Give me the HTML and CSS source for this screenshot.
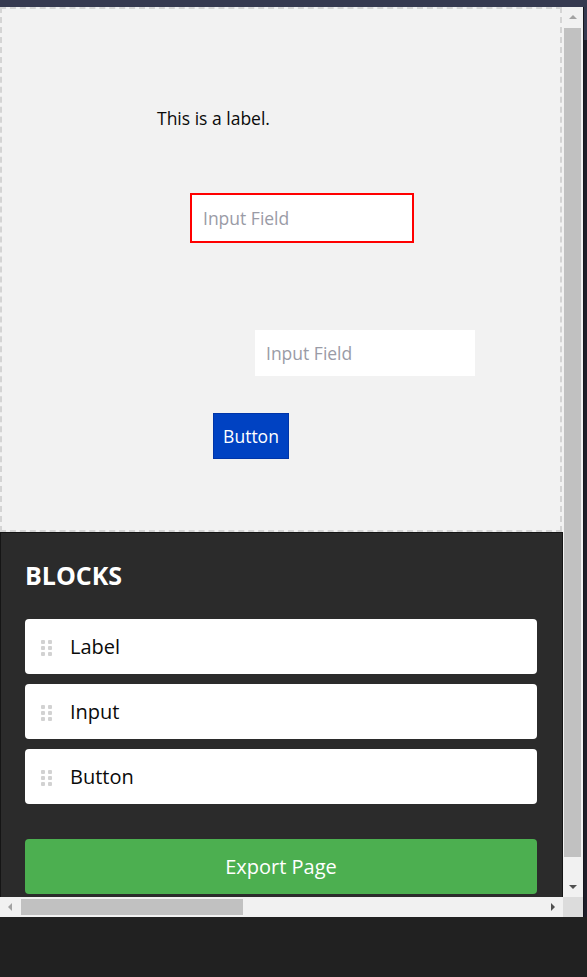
FILE: index.html
```html
<!DOCTYPE html>
<html lang="en">
<head>
<meta charset="utf-8">
<title>Page Builder</title>
<link rel="stylesheet" href="styles.css">
</head>
<body>
<div class="topbar"></div>
<div class="window">
  <div class="frame">
    <div class="viewport">
      <div class="canvas">
        <p class="el el-label">This is a label.</p>
        <input class="el el-input el-input-1 is-selected" type="text" placeholder="Input Field">
        <input class="el el-input el-input-2" type="text" placeholder="Input Field">
        <button class="el el-button" type="button">Button</button>
      </div>
      <div class="panel">
        <h2 class="panel-title">BLOCKS</h2>
        <ul class="blocks">
          <li class="block"><span class="grip"><i></i><i></i><i></i><i></i><i></i><i></i></span><span class="block-name">Label</span></li>
          <li class="block"><span class="grip"><i></i><i></i><i></i><i></i><i></i><i></i></span><span class="block-name">Input</span></li>
          <li class="block"><span class="grip"><i></i><i></i><i></i><i></i><i></i><i></i></span><span class="block-name">Button</span></li>
        </ul>
        <button class="export" type="button">Export Page</button>
      </div>
    </div>
    <div class="vscroll">
      <div class="sb-btn"><span class="tri tri-up"></span></div>
      <div class="vtrack"><div class="vthumb"></div></div>
      <div class="sb-btn"><span class="tri tri-down"></span></div>
    </div>
    <div class="hscroll">
      <div class="sb-btn"><span class="tri tri-left"></span></div>
      <div class="htrack"><div class="hthumb"></div></div>
      <div class="sb-btn"><span class="tri tri-right"></span></div>
    </div>
    <div class="corner"></div>
  </div>
  <div class="edge"><div class="edge-top"></div></div>
</div>
</body>
</html>
```

FILE: styles.css
```css
* { box-sizing: border-box; }

html, body {
  margin: 0;
  padding: 0;
}

body {
  background: #212121;
  font-family: "Open Sans", "Noto Sans", sans-serif;
  height: 977px;
  overflow: hidden;
}

.topbar {
  height: 7px;
  background: #363a50;
}

.window {
  display: flex;
}

.frame {
  width: 583px;
  display: grid;
  grid-template-columns: 563px 20px;
  grid-template-rows: 890px 20px;
}

.edge {
  width: 4px;
  background: #1e1e29;
  border-left: 1px solid #16161e;
}

.edge-top {
  height: 33px;
  background: #363a50;
}

.viewport {
  overflow: hidden;
  background: #f2f2f2;
}

/* ---------- canvas ---------- */
.canvas {
  position: relative;
  width: 562px;
  height: 525px;
  background: #f2f2f2;
  border: 2px dashed #d4d4d4;
}

.el {
  position: absolute;
  margin: 0;
  font-family: "Open Sans", "Noto Sans", sans-serif;
  font-size: 17.5px;
}

.el-label {
  left: 155px;
  top: 98px;
  line-height: 23px;
  color: #0a0a0a;
}

.el-input {
  width: 220px;
  height: 46px;
  border: none;
  background: #fff;
  padding: 0 11px;
  color: #333;
  outline: none;
}

.el-input::placeholder {
  color: #9a9ba6;
}

.el-input.is-selected {
  outline: 2px solid #ff0000;
}

.el-input-1 {
  left: 190px;
  top: 186px;
}

.el-input-2 {
  left: 253px;
  top: 321px;
}

.el-button {
  left: 211px;
  top: 404px;
  width: 76px;
  height: 46px;
  padding: 0;
  background: #0042c2;
  border: 1px solid #0035a8;
  color: #fff;
  text-align: center;
}

/* ---------- panel ---------- */
.panel {
  width: 563px;
  background: #2b2b2b;
  border: 1px solid #151515;
  padding: 26px 25px 30px 24px;
}

.panel-title {
  margin: 0 0 28px;
  font-size: 25px;
  line-height: 32px;
  font-weight: 700;
  color: #fff;
}

.blocks {
  list-style: none;
  margin: 0;
  padding: 0;
  display: flex;
  flex-direction: column;
  gap: 10px;
}

.block {
  height: 55px;
  background: #fff;
  border-radius: 4px;
  display: flex;
  align-items: center;
  padding-left: 16px;
  gap: 18px;
  font-size: 20px;
  color: #0a0a0a;
}

.grip {
  display: grid;
  grid-template-columns: 4px 4px;
  grid-auto-rows: 4px;
  column-gap: 3px;
  row-gap: 2px;
  margin-top: 2px;
}

.grip i {
  display: block;
  background: #d2d2d2;
  border-radius: 1px;
}

.export {
  display: block;
  width: 100%;
  height: 55px;
  margin-top: 35px;
  background: #4caf50;
  border: none;
  border-radius: 4px;
  color: #fff;
  font-family: "Open Sans", "Noto Sans", sans-serif;
  font-size: 20px;
  padding: 0;
}

/* ---------- scrollbars ---------- */
.vscroll {
  background: #f1f1f1;
  display: flex;
  flex-direction: column;
}

.hscroll {
  background: #f1f1f1;
  display: flex;
}

.corner {
  background: #dcdcdc;
}

.sb-btn {
  width: 20px;
  height: 20px;
  flex: none;
  display: flex;
  align-items: center;
  justify-content: center;
}

.vtrack {
  flex: 1;
  padding: 1px 2px 0 1px;
}

.vthumb {
  height: 829px;
  background: #c1c1c1;
}

.htrack {
  flex: 1;
  padding: 2px 0 2px 1px;
}

.hthumb {
  width: 222px;
  height: 100%;
  background: #c1c1c1;
}

.tri {
  width: 0;
  height: 0;
  border-style: solid;
}

.tri-up {
  border-width: 0 4px 4px 4px;
  border-color: transparent transparent #a3a3a3 transparent;
}

.tri-down {
  border-width: 4px 4px 0 4px;
  border-color: #505050 transparent transparent transparent;
}

.tri-left {
  border-width: 4px 4px 4px 0;
  border-color: transparent #a3a3a3 transparent transparent;
}

.tri-right {
  border-width: 4px 0 4px 4px;
  border-color: transparent transparent transparent #505050;
}
```
